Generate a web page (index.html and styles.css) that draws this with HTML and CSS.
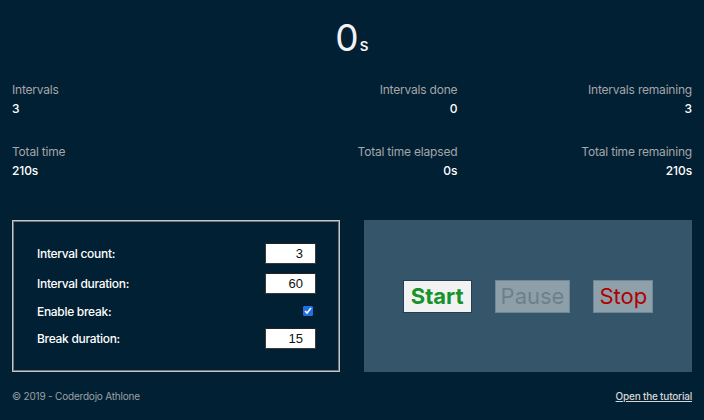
FILE: index.html
```html
<!DOCTYPE html>
<html lang="en">
<head>
<meta charset="utf-8">
<title>Interval Timer</title>
<link rel="stylesheet" href="styles.css">
</head>
<body>
  <main class="page">
    <div class="timer"><span class="timer-num">0</span><span class="timer-unit">s</span></div>

    <section class="stats">
      <div class="stat">
        <div class="stat-label">Intervals</div>
        <div class="stat-value">3</div>
      </div>
      <div class="stat stat-right">
        <div class="stat-label">Intervals done</div>
        <div class="stat-value">0</div>
      </div>
      <div class="stat stat-right">
        <div class="stat-label">Intervals remaining</div>
        <div class="stat-value">3</div>
      </div>
      <div class="stat">
        <div class="stat-label">Total time</div>
        <div class="stat-value">210s</div>
      </div>
      <div class="stat stat-right">
        <div class="stat-label">Total time elapsed</div>
        <div class="stat-value">0s</div>
      </div>
      <div class="stat stat-right">
        <div class="stat-label">Total time remaining</div>
        <div class="stat-value">210s</div>
      </div>
    </section>

    <section class="panels">
      <form class="settings">
        <div class="field">
          <label class="field-label" for="count">Interval count:</label>
          <input class="num-input" id="count" type="text" value="3">
        </div>
        <div class="field">
          <label class="field-label" for="duration">Interval duration:</label>
          <input class="num-input" id="duration" type="text" value="60">
        </div>
        <div class="field field-check">
          <label class="field-label" for="brk">Enable break:</label>
          <input class="check" id="brk" type="checkbox" checked>
        </div>
        <div class="field">
          <label class="field-label" for="brkdur">Break duration:</label>
          <input class="num-input" id="brkdur" type="text" value="15">
        </div>
      </form>

      <div class="controls">
        <button class="btn btn-start" type="button">Start</button>
        <button class="btn btn-pause" type="button">Pause</button>
        <button class="btn btn-stop" type="button">Stop</button>
      </div>
    </section>

    <footer class="footer">
      <span class="copy">© 2019 - Coderdojo Athlone</span>
      <a class="tutorial" href="#">Open the tutorial</a>
    </footer>
  </main>
</body>
</html>
```

FILE: styles.css
```css
html, body {
  margin: 0;
  padding: 0;
  background: #022033;
}

body {
  font-family: Inter, "Noto Sans", "Liberation Sans", sans-serif;
  color: #ffffff;
}

.page {
  padding: 0 12px;
}

.timer {
  margin-top: 16px;
  height: 44px;
  display: flex;
  justify-content: center;
  align-items: baseline;
  line-height: 44px;
}

.timer-num {
  font-size: 37px;
  font-weight: 400;
  color: #f2f2f2;
}

.timer-unit {
  font-size: 17px;
  font-weight: 500;
  color: #f2f2f2;
  margin-left: 1px;
}

.stats {
  margin-top: 20px;
  display: grid;
  grid-template-columns: 1fr 1fr 1fr;
  column-gap: 24px;
  row-gap: 24px;
}

.stat-right {
  text-align: right;
}

.stat-label {
  font-size: 12px;
  letter-spacing: -0.2px;
  line-height: 19px;
  color: #a3a6aa;
}

.stat-value {
  font-size: 12px;
  letter-spacing: -0.1px;
  line-height: 19px;
  font-weight: 500;
  color: #ffffff;
}

.panels {
  margin-top: 40px;
  display: grid;
  grid-template-columns: 1fr 1fr;
  column-gap: 24px;
  height: 152px;
}

.settings {
  margin: 0;
  border: 1px solid #c4c4c4;
  box-shadow: inset 0 0 0 1px #6f7780;
  padding: 0 23px 0 24px;
  display: flex;
  flex-direction: column;
  justify-content: center;
  gap: 8px;
}

.field {
  display: flex;
  align-items: center;
  justify-content: space-between;
  height: 22px;
}

.field-check {
  height: 17px;
}

.field-label {
  font-size: 12px;
  letter-spacing: -0.3px;
  font-weight: 500;
  color: #ffffff;
}

.num-input {
  box-sizing: border-box;
  width: 51px;
  height: 21px;
  margin: 0;
  padding: 0 12px 0 2px;
  text-align: right;
  font-family: "Liberation Sans", Arial, sans-serif;
  font-size: 13px;
  color: #111;
  background: #ffffff;
  border: 1px solid #3a3a3a;
  border-top-color: #222;
  outline: none;
}

.check {
  width: 10px;
  height: 10px;
  margin: 0 3px 0 0;
  accent-color: #1f6fe8;
}

.controls {
  background: #35566a;
  display: flex;
  align-items: center;
  justify-content: center;
  gap: 23px;
}

.btn {
  height: 33px;
  padding: 0 5px;
  font-family: Inter, "Noto Sans", "Liberation Sans", sans-serif;
  font-size: 22px;
  line-height: 31px;
  border: 1px solid #6e8796;
  border-radius: 0;
  cursor: pointer;
}

.btn-start {
  background: #f2f2f2;
  color: #16932a;
  font-weight: 700;
  border-color: #233f50;
  padding: 0 7px;
}

.btn-pause {
  background: #8da0aa;
  color: #6d808b;
  font-weight: 400;
  padding: 0 5px;
}

.btn-stop {
  background: #8ea1ab;
  color: #b00000;
  font-weight: 400;
}

.footer {
  margin-top: 16px;
  display: flex;
  justify-content: space-between;
  align-items: center;
  font-size: 10px;
  letter-spacing: -0.2px;
  line-height: 16px;
}

.copy {
  color: #9aa0a6;
}

.tutorial {
  color: #d6d6d6;
  font-weight: 500;
  text-decoration: underline;
}
```
